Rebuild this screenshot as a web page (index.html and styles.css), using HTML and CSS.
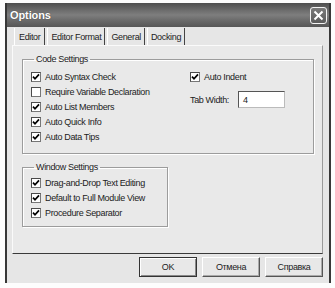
FILE: index.html
```html
<!DOCTYPE html>
<html>
<head>
<meta charset="utf-8">
<link rel="stylesheet" href="styles.css">
</head>
<body>
<div class="window">
  <div class="titlebar">
    <span class="title">Options</span>
    <span class="close"><svg width="11" height="11" viewBox="0 0 11 11"><path d="M1.5 1.5 L9.5 9.5 M9.5 1.5 L1.5 9.5" stroke="#fff" stroke-width="2" fill="none"/></svg></span>
  </div>
  <div class="tabs">
    <div class="tab active">Editor</div>
    <div class="tab">Editor Format</div>
    <div class="tab">General</div>
    <div class="tab">Docking</div>
  </div>
  <div class="panel">
    <fieldset class="group code">
      <legend>Code Settings</legend>
      <div class="cols">
        <div class="col">
          <div class="cb"><span class="box"><svg width="8" height="8" viewBox="0 0 8 8"><path d="M1 3.6 L3 5.8 L7 1.4" stroke="#000" stroke-width="1.7" fill="none"/></svg></span>Auto Syntax Check</div>
          <div class="cb"><span class="box"></span>Require Variable Declaration</div>
          <div class="cb"><span class="box"><svg width="8" height="8" viewBox="0 0 8 8"><path d="M1 3.6 L3 5.8 L7 1.4" stroke="#000" stroke-width="1.7" fill="none"/></svg></span>Auto List Members</div>
          <div class="cb"><span class="box"><svg width="8" height="8" viewBox="0 0 8 8"><path d="M1 3.6 L3 5.8 L7 1.4" stroke="#000" stroke-width="1.7" fill="none"/></svg></span>Auto Quick Info</div>
          <div class="cb"><span class="box"><svg width="8" height="8" viewBox="0 0 8 8"><path d="M1 3.6 L3 5.8 L7 1.4" stroke="#000" stroke-width="1.7" fill="none"/></svg></span>Auto Data Tips</div>
        </div>
        <div class="col right">
          <div class="cb"><span class="box"><svg width="8" height="8" viewBox="0 0 8 8"><path d="M1 3.6 L3 5.8 L7 1.4" stroke="#000" stroke-width="1.7" fill="none"/></svg></span>Auto Indent</div>
          <div class="tabwidth"><span>Tab Width:</span><span class="input">4</span></div>
        </div>
      </div>
    </fieldset>
    <fieldset class="group win">
      <legend>Window Settings</legend>
      <div class="col">
        <div class="cb"><span class="box"><svg width="8" height="8" viewBox="0 0 8 8"><path d="M1 3.6 L3 5.8 L7 1.4" stroke="#000" stroke-width="1.7" fill="none"/></svg></span>Drag-and-Drop Text Editing</div>
        <div class="cb"><span class="box"><svg width="8" height="8" viewBox="0 0 8 8"><path d="M1 3.6 L3 5.8 L7 1.4" stroke="#000" stroke-width="1.7" fill="none"/></svg></span>Default to Full Module View</div>
        <div class="cb"><span class="box"><svg width="8" height="8" viewBox="0 0 8 8"><path d="M1 3.6 L3 5.8 L7 1.4" stroke="#000" stroke-width="1.7" fill="none"/></svg></span>Procedure Separator</div>
      </div>
    </fieldset>
  </div>
  <div class="buttons">
    <div class="btn default">OK</div>
    <div class="btn">Отмена</div>
    <div class="btn">Справка</div>
  </div>
</div>
</body>
</html>
```

FILE: styles.css
```css
html, body {
  margin: 0;
  padding: 0;
  background: #fdfdfd;
}
body {
  font-family: "Liberation Sans", Arial, sans-serif;
  font-size: 9px;
  letter-spacing: -0.35px;
  color: #222;
}
.window {
  box-sizing: border-box;
  margin: 3px 0 0 5px;
  width: 326px;
  height: 280px;
  border-left: 2px solid #383838;
  border-right: 2px solid #383838;
  background: #e6e6e6;
  display: flex;
  flex-direction: column;
}
.titlebar {
  height: 24px;
  flex: none;
  display: flex;
  align-items: center;
  justify-content: space-between;
  padding: 0 2px 0 3px;
  background: linear-gradient(#4e4e4e, #6c6c6c 30%, #7e7e7e 50%, #686868 75%, #565656);
}
.title {
  color: #fff;
  font-weight: bold;
  font-size: 11px;
  letter-spacing: -0.1px;
  text-shadow: 0 0 1px #333;
}
.close {
  box-sizing: border-box;
  width: 17px;
  height: 17px;
  border: 1px solid #f4f4f4;
  border-radius: 3px;
  background: linear-gradient(#7a7a7a, #5c5c5c);
  display: flex;
  align-items: center;
  justify-content: center;
}
.tabs {
  display: flex;
  margin-top: 1px;
  padding-left: 7px;
  height: 17px;
  flex: none;
}
.tab {
  box-sizing: border-box;
  height: 17px;
  padding: 0 3px 0 3px;
  display: flex;
  align-items: center;
  border-right: 1px solid #444;
  border-left: 1px solid #fff;
  margin-right: 2px;
  white-space: nowrap;
}
.tab.active {
  padding: 0 4px 0 4px;
}
.panel {
  box-sizing: border-box;
  margin-left: 5px;
  width: 311px;
  height: 209px;
  flex: none;
  border-top: 1px solid #fafafa;
  border-left: 1px solid #fafafa;
  border-right: 1px solid #9a9a9a;
  border-bottom: 1px solid #3a3a3a;
  background: #e9e9e9;
  padding: 8px 0 0 9px;
  display: flex;
  flex-direction: column;
  align-items: flex-start;
}
.group {
  margin: 0;
  padding: 0 0 4px 8px;
  border: 1px solid #9c9c9c;
  box-shadow: 1px 1px 0 #fff, inset 1px 1px 0 #fff;
  min-width: 0;
}
.group legend {
  padding: 0 2px;
  margin-left: 3px;
  line-height: 11px;
}
.code {
  width: 292px;
  box-sizing: border-box;
  padding-bottom: 9px;
}
.win {
  width: 146px;
  box-sizing: border-box;
  margin-top: 8px;
  padding-top: 2px;
  padding-bottom: 6px;
}
.cols {
  display: grid;
  grid-template-columns: 159px 1fr;
  padding-top: 4px;
}
.col {
  display: flex;
  flex-direction: column;
}
.cb {
  height: 15px;
  display: flex;
  align-items: center;
  white-space: nowrap;
}
.box {
  box-sizing: border-box;
  width: 10px;
  height: 10px;
  margin-right: 4px;
  background: #fff;
  border: 1px solid #4a4a4a;
  border-right-color: #777;
  border-bottom-color: #777;
  display: flex;
  align-items: center;
  justify-content: center;
}
.tabwidth {
  display: flex;
  align-items: center;
  margin-top: 7px;
}
.input {
  box-sizing: border-box;
  margin-left: 9px;
  width: 47px;
  height: 17px;
  background: #fff;
  border: 1px solid #555;
  border-right-color: #bbb;
  border-bottom-color: #bbb;
  padding-left: 4px;
  display: flex;
  align-items: center;
}
.buttons {
  display: flex;
  justify-content: flex-end;
  gap: 5px;
  margin-top: 3px;
  padding-right: 6px;
}
.btn {
  box-sizing: border-box;
  width: 58px;
  height: 20px;
  display: flex;
  align-items: center;
  justify-content: center;
  background: #e8e8e8;
  border: 1px solid #fff;
  border-right-color: #555;
  border-bottom-color: #555;
  box-shadow: inset -1px -1px 0 #aaa;
}
.btn.default {
  border: 1px solid #333;
  box-shadow: inset 1px 1px 0 #fff, inset -1px -1px 0 #888;
}
```
